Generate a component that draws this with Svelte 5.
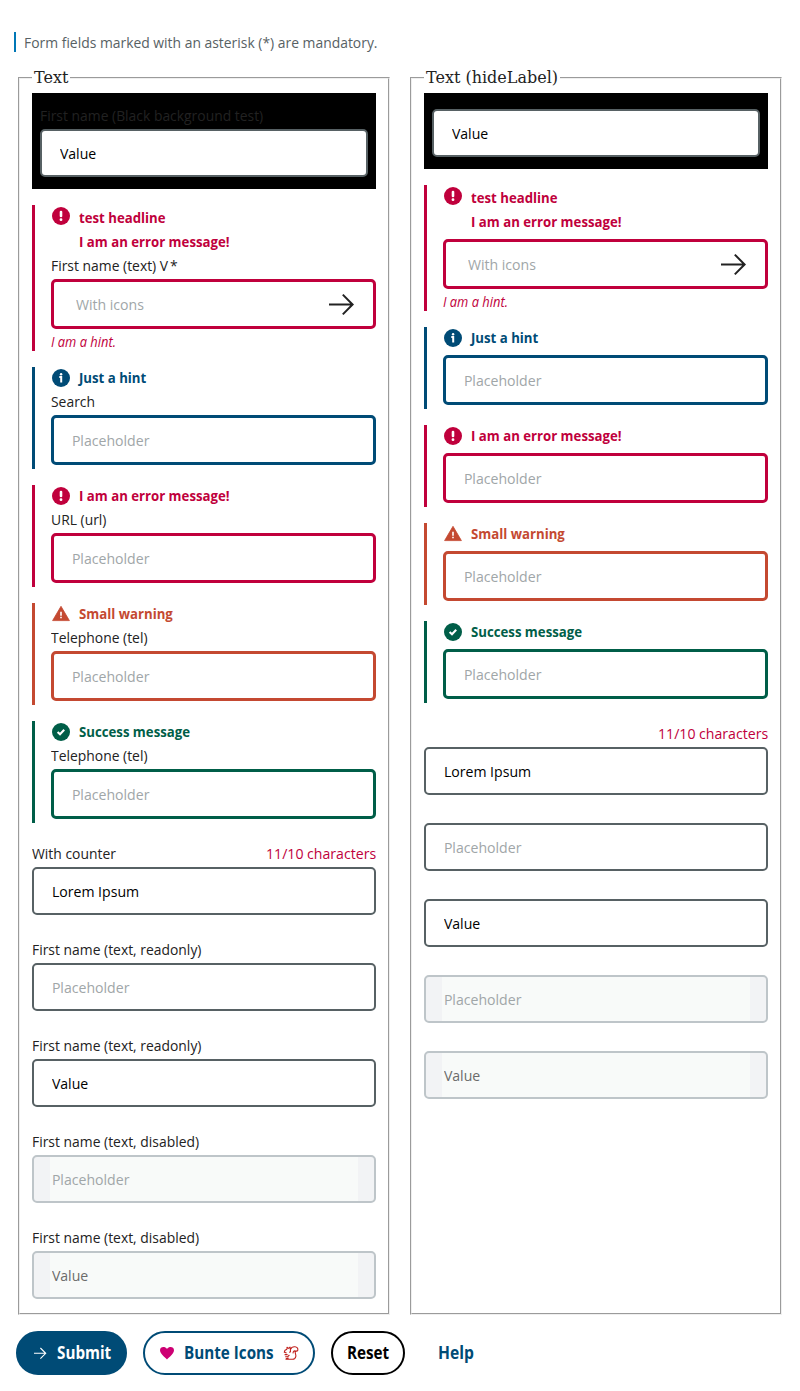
<script>
  const columns = [
    {
      legend: 'Text',
      hideLabel: false,
      fields: [
        { label: 'First name (Black background test)', value: 'Value', dark: true },
        { label: 'First name (text) V', required: true, type: 'error', headline: 'test headline', message: 'I am an error message!', placeholder: 'With icons', arrow: true, hint: 'I am a hint.' },
        { label: 'Search', type: 'info', message: 'Just a hint', placeholder: 'Placeholder' },
        { label: 'URL (url)', type: 'error', message: 'I am an error message!', placeholder: 'Placeholder' },
        { label: 'Telephone (tel)', type: 'warning', message: 'Small warning', placeholder: 'Placeholder' },
        { label: 'Telephone (tel)', type: 'success', message: 'Success message', placeholder: 'Placeholder' },
        { label: 'With counter', value: 'Lorem Ipsum', counter: '11/10 characters' },
        { label: 'First name (text, readonly)', placeholder: 'Placeholder', readonly: true },
        { label: 'First name (text, readonly)', value: 'Value', readonly: true },
        { label: 'First name (text, disabled)', placeholder: 'Placeholder', disabled: true },
        { label: 'First name (text, disabled)', value: 'Value', disabled: true }
      ]
    }
  ];
  columns.push({ legend: 'Text (hideLabel)', hideLabel: true, fields: columns[0].fields });
</script>

<main>
  <p class="mandatory"><span class="narrow">Form fields marked with an asterisk (*) are mandatory.</span></p>

  <div class="columns">
    {#each columns as col}
      <fieldset>
        <legend>{col.legend}</legend>
        <div class="stack">
          {#each col.fields as f}
            <div class="field {f.type ?? 'plain'}" class:dark={f.dark} class:nolabel={col.hideLabel} class:headed={f.headline}>
              {#if f.message}
                <div class="alert">
                  <svg viewBox="0 0 20 20" width="20" height="22">
                    {#if f.type === 'warning'}
                      <path d="M10 2.3 18.4 16.6H1.6Z" fill="currentColor" stroke="currentColor" stroke-width="0.8" stroke-linejoin="round" />
                      <path d="M10 7.8v3.9M10 12.8v1.5" stroke="#fff" stroke-width="1.6" />
                    {:else}
                      <circle cx="10" cy="10" r="9" fill="currentColor" />
                      {#if f.type === 'error'}
                        <path d="M10 6v4" stroke="#fff" stroke-width="2.6" stroke-linecap="round" />
                        <circle cx="10" cy="13.7" r="1.4" fill="#fff" />
                      {:else if f.type === 'info'}
                        <path d="M8.3 9h1.9v5.4" fill="none" stroke="#fff" stroke-width="2" />
                        <circle cx="10.1" cy="6.2" r="1.2" fill="#fff" />
                      {:else}
                        <path d="m6.6 10 2.4 2.2 4.2-4.4" fill="none" stroke="#fff" stroke-width="2.1" />
                      {/if}
                    {/if}
                  </svg>
                  <div class="messages">
                    {#if f.headline}<strong>{f.headline}</strong>{/if}
                    <strong>{f.message}</strong>
                  </div>
                </div>
              {/if}
              {#if !col.hideLabel || f.counter}
                <div class="label-row">
                  {#if !col.hideLabel}<span class="narrow">{f.label}{#if f.required}<i class="star">*</i>{/if}</span>{/if}
                  {#if f.counter}<span class="narrow counter">{f.counter}</span>{/if}
                </div>
              {/if}
              <div class="box" class:off={f.disabled} class:with-icon={f.arrow} class:gap={col.hideLabel && !f.counter}>
                <div class="inner">
                  <input aria-label={f.label} value={f.value ?? ''} placeholder={f.placeholder} readonly={f.readonly} disabled={f.disabled} />
                </div>
                {#if f.arrow}
                  <svg class="arrow" viewBox="0 0 26 24" width="26" height="24" fill="none" stroke="#222" stroke-width="2">
                    <path d="M0 12.5H23.4M13.8 2.6 23.6 12.5 13.8 22.4" />
                  </svg>
                {/if}
              </div>
              {#if f.hint}<div class="hint"><span class="narrow">{f.hint}</span></div>{/if}
            </div>
          {/each}
        </div>
      </fieldset>
    {/each}
  </div>

  <div class="buttons">
    <button class="submit">
      <svg viewBox="0 0 14 14" width="14" height="14" fill="none" stroke="#fff" stroke-width="1.1"><path d="M1 7.3h11.7M7.4 2l5.3 5.3-5.3 5.3" /></svg>
      <span>Submit</span>
    </button>
    <button class="bunte">
      <svg viewBox="0 0 14 14" width="14" height="14"><path d="M7 13.4C4.8 11.2 0 7.7 0 4.2 0 .5 5 .1 7 3 9 .1 14 .5 14 4.2 14 7.7 9.2 11.2 7 13.4Z" fill="#cd0073" /></svg>
      <span>Bunte Icons</span>
      <svg class="squirrel" viewBox="0 0 16 16" width="16" height="16" fill="none" stroke="#c0201c" stroke-width="1.1" stroke-linejoin="round"><path d="M4 4.3V2.2L5.6 3.4 7 2.2 7.4 4.6C7.9 6 7.3 7 6.4 7.6M4 4.3 2 5.3 1.3 7.3 3.6 8M1.6 9.6H4.6M2.2 11.7H4.8L6.4 10M7.6 4.2C8.4 2.2 10 1.6 12 1.8 14 2 15.2 3.5 14.8 5.3 14.4 6.3 13.6 6.3 12.4 6M12.4 6C11.4 8 13.4 9.4 12.8 11.6 12.4 13.4 11.2 14.3 9.6 14.3H3C3 13.4 3.8 13.1 5.6 13.1M12.4 6C10.6 5.6 9.8 7 10.2 8.4" /></svg>
    </button>
    <button class="reset"><span>Reset</span></button>
    <button class="help"><span>Help</span></button>
  </div>
</main>

<style>
  :global(body) {
    background: #fff;
  }
  main {
    --sans: 'Open Sans', 'Noto Sans', sans-serif;
    font: 15px/24px var(--sans);
    color: #222;
    padding: 32px 16px 16px;
    box-sizing: border-box;
    width: 800px;
    height: 1391px;
  }
  .narrow {
    display: inline-block;
    white-space: nowrap;
    transform: scaleX(0.926);
    transform-origin: left;
  }
  .mandatory {
    margin: 0 0 16px -2px;
    border-left: 2px solid #0077b6;
    padding-left: 8px;
    line-height: 20px;
    color: #576164;
  }
  .columns {
    display: grid;
    grid-template-columns: 1fr 1fr;
    gap: 16px;
    height: 1247px;
  }
  fieldset {
    margin: 0 2px;
    padding: 5.6px 12px 10px;
    border: 2px groove threedface;
    min-width: 0;
  }
  legend {
    font: 16px/19px 'DejaVu Serif', serif;
    padding: 0 2px;
  }
  .stack {
    display: flex;
    flex-direction: column;
    gap: 16px;
  }
  .field {
    --tone: #576164;
  }
  .plain {
    padding: 4px 0;
  }
  .plain.dark {
    background: #000;
    padding: 12px 8px;
  }
  .error { --tone: #c0003c; }
  .info { --tone: #004b76; }
  .warning { --tone: #c44931; }
  .success { --tone: #005e48; }
  .field:not(.plain) {
    border-left: 3px solid var(--tone);
    padding: 0 0 4px 16px;
  }
  .field.headed {
    padding-bottom: 0;
  }
  .alert {
    display: flex;
    gap: 8px;
    color: var(--tone);
  }
  .messages {
    display: flex;
    flex-direction: column;
    align-items: flex-start;
  }
  .messages strong {
    transform: scaleX(0.88);
    transform-origin: left;
  }
  .headed .messages {
    padding-top: 2px;
  }
  .messages strong,
  .label-row {
    position: relative;
    top: -2px;
  }
  .label-row {
    display: flex;
    height: 24px;
  }
  .star {
    font-style: normal;
    margin-left: 2px;
  }
  .counter {
    margin-left: auto;
    color: #c0003c;
    transform: scaleX(0.94);
    transform-origin: right;
  }
  .box {
    box-sizing: border-box;
    display: flex;
    align-items: center;
    height: 48px;
    border: 2px solid var(--tone);
    border-radius: 5px;
    padding: 0 16px;
    background: #fff;
  }
  .field:not(.plain) .box {
    height: 50px;
    border-width: 3px;
  }
  .box.gap {
    margin-top: 4px;
  }
  .box.with-icon {
    padding: 0 18px 0 20px;
  }
  .inner {
    flex: 1;
    min-width: 0;
    height: 100%;
    overflow: hidden;
  }
  input {
    box-sizing: border-box;
    width: 106%;
    height: 100%;
    border: 0;
    outline: 0;
    padding: 0 2px;
    background: none;
    font: inherit;
    color: #000;
    transform: scaleX(0.94);
    transform-origin: left;
  }
  input::placeholder {
    color: #a0a6a8;
    opacity: 1;
  }
  .box.off {
    border-color: #bec5c9;
    background: #f2f3f5;
  }
  .off .inner {
    background: #f8faf9;
  }
  .off input {
    color: #6b6b6b;
  }
  .hint {
    height: 22px;
    line-height: 26px;
    font-size: 14px;
    font-style: italic;
    color: #c0003c;
  }
  .hint .narrow {
    transform: scaleX(0.92);
  }
  .buttons {
    display: flex;
    gap: 16px;
    margin-top: 16px;
  }
  button {
    box-sizing: border-box;
    display: flex;
    align-items: center;
    height: 44px;
    border: 2px solid #004b76;
    border-radius: 24px;
    padding: 0 0 0 15px;
    gap: 10px;
    background: #fff;
    color: #004b76;
    font: 700 17px/24px var(--sans);
    white-space: nowrap;
  }
  button span {
    transform: scaleX(0.895);
    transform-origin: left;
  }
  .submit {
    width: 111px;
    background: #004b76;
    color: #fff;
  }
  .bunte {
    width: 172px;
  }
  .squirrel {
    flex: none;
    margin-left: -11px;
  }
  .reset {
    width: 74px;
    padding-left: 14px;
    border-color: #000;
    color: #000;
  }
  .help {
    width: 68px;
    border-color: transparent;
  }
  .help span {
    transform: scaleX(0.92);
  }
</style>
